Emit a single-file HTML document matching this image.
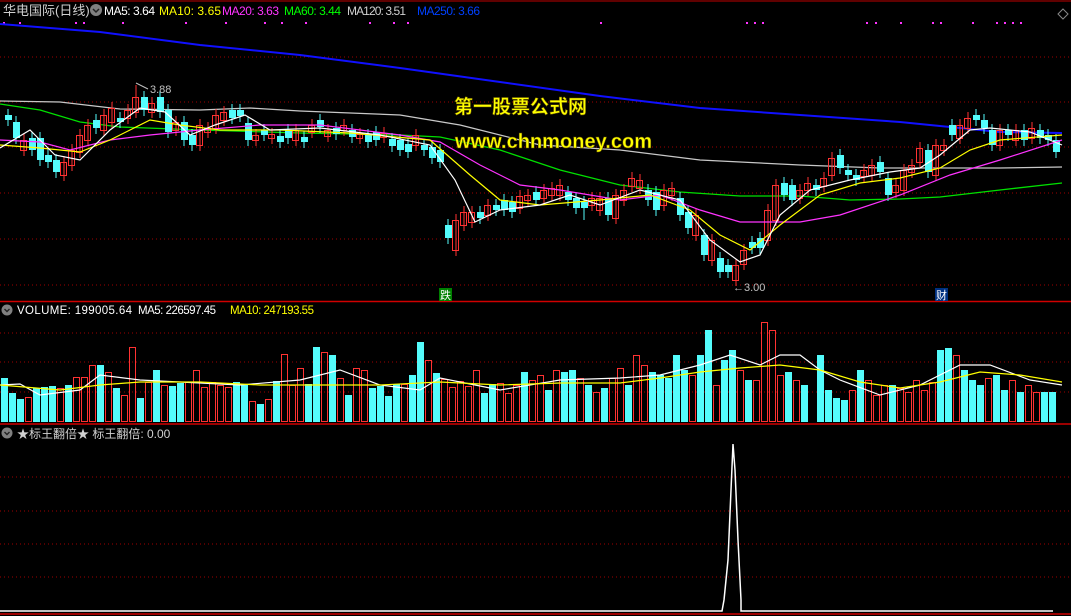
<!DOCTYPE html>
<html><head><meta charset="utf-8"><style>
html,body{margin:0;padding:0;background:#000;width:1071px;height:616px;overflow:hidden}
svg{display:block}
text{font-family:"Liberation Sans","Noto Sans CJK SC",sans-serif}
</style></head><body>
<svg width="1071" height="616" viewBox="0 0 1071 616" xmlns="http://www.w3.org/2000/svg">
<rect width="1071" height="616" fill="#000"/>
<line x1="0" y1="1" x2="1071" y2="1" stroke="#c00000"/>
<g stroke="#a00000" stroke-dasharray="1 3">
<line x1="0" y1="57" x2="1071" y2="57"/><line x1="0" y1="102" x2="1071" y2="102"/><line x1="0" y1="147" x2="1071" y2="147"/><line x1="0" y1="193" x2="1071" y2="193"/><line x1="0" y1="239" x2="1071" y2="239"/><line x1="0" y1="285" x2="1071" y2="285"/>
<line x1="0" y1="333" x2="1071" y2="333"/><line x1="0" y1="362" x2="1071" y2="362"/><line x1="0" y1="392" x2="1071" y2="392"/>
<line x1="0" y1="477" x2="1071" y2="477"/><line x1="0" y1="511" x2="1071" y2="511"/><line x1="0" y1="544" x2="1071" y2="544"/><line x1="0" y1="577" x2="1071" y2="577"/>
</g>
<line x1="0" y1="301.5" x2="1071" y2="301.5" stroke="#d00000" stroke-width="1.5"/>
<line x1="0" y1="424" x2="1071" y2="424" stroke="#d00000" stroke-width="1.5"/>
<line x1="0" y1="614" x2="1071" y2="614" stroke="#d00000" stroke-width="1.5"/>

<!-- title -->
<text x="3" y="15" fill="#d0d0d0" font-size="13">华电国际(日线)</text>
<circle cx="96" cy="10" r="6" fill="#808080"/><path d="M93 9 l3 3 l3 -3" stroke="#222" stroke-width="1.5" fill="none"/>
<g font-size="12">
<text x="104" y="15" fill="#fff" textLength="51">MA5: 3.64</text>
<text x="159" y="15" fill="#ffff00" textLength="62">MA10: 3.65</text>
<text x="222" y="15" fill="#ff33ff" textLength="57">MA20: 3.63</text>
<text x="284" y="15" fill="#00ff00" textLength="57">MA60: 3.44</text>
<text x="347" y="15" fill="#d0d0d0" textLength="59">MA120: 3.51</text>
<text x="417" y="15" fill="#0040ff" textLength="63">MA250: 3.66</text>
</g>
<path d="M1063 9 l5 5 l-5 5 l-5 -5z" stroke="#888" fill="none"/>
<g fill="#ff33ff">
<rect x="3" y="22" width="2" height="2"/><rect x="19" y="22" width="2" height="2"/><rect x="75" y="22" width="2" height="2"/><rect x="83" y="22" width="2" height="2"/><rect x="122" y="22" width="2" height="2"/><rect x="185" y="22" width="2" height="2"/><rect x="225" y="22" width="2" height="2"/><rect x="264" y="22" width="2" height="2"/><rect x="281" y="22" width="2" height="2"/><rect x="305" y="22" width="2" height="2"/><rect x="369" y="22" width="2" height="2"/><rect x="393" y="22" width="2" height="2"/><rect x="407" y="22" width="2" height="2"/><rect x="600" y="22" width="2" height="2"/><rect x="746" y="22" width="2" height="2"/><rect x="754" y="22" width="2" height="2"/><rect x="762" y="22" width="2" height="2"/><rect x="866" y="22" width="2" height="2"/><rect x="875" y="22" width="2" height="2"/><rect x="900" y="22" width="2" height="2"/><rect x="932" y="22" width="2" height="2"/><rect x="940" y="22" width="2" height="2"/><rect x="972" y="22" width="2" height="2"/><rect x="996" y="22" width="2" height="2"/><rect x="1004" y="22" width="2" height="2"/><rect x="1012" y="22" width="2" height="2"/><rect x="1020" y="22" width="2" height="2"/>
</g>

<!-- MA lines -->
<g fill="none" stroke-width="1.3">
<polyline stroke="#1010ff" stroke-width="2" points="0,24 100,32 200,45 300,55 400,68 500,82 600,96 700,108 800,115 900,122 1000,132 1062,133"/>
<polyline stroke="#c8c8c8" points="0,101 60,102 120,109 200,110 250,108 300,111 400,115 460,125 540,145 620,150 700,160 800,165 880,168 940,168 1000,168 1062,167"/>
<polyline stroke="#00e000" points="0,104 40,110 80,122 120,127 200,130 300,133 400,135 440,137 500,150 560,170 620,185 680,192 740,196 800,196 850,200 900,199 940,197 1000,190 1062,183"/>
</g>
<!-- candles -->
<g stroke="#54fcfc" stroke-width="1">
<path d="M8 109V126M16 116V144M32 132V156M40 132V166M48 149V168M56 154V178M96 114V134M120 112V128M144 91V116M160 91V118M168 104V138M184 116V146M192 129V151M232 104V124M240 104V122M248 117V146M264 124V141M280 130V148M288 124V144M304 131V148M320 114V133M336 122V140M352 124V143M368 129V148M376 126V146M392 133V152M400 134V156M408 138V158M424 139V156M432 141V164M440 144V168M448 219V244M480 206V224M496 199V216M504 194V216M512 196V218M536 186V206M568 186V206M576 192V214M584 196V220M608 192V221M648 184V206M656 186V216M680 192V221M688 206V234M704 229V261M720 252V278M728 259V278M752 236V254M760 232V254M784 177V201M792 179V206M816 179V196M840 149V174M848 164V181M856 169V186M880 156V178M888 172V201M928 144V178M952 119V141M976 109V126M984 114V134M992 124V151M1008 124V141M1024 124V146M1040 124V144M1048 129V146M1056 134V158"/>
</g>
<g fill="#54fcfc">
<path d="M5 115h7v5h-7zM13 122h7v16h-7zM29 138h7v12h-7zM37 138h7v22h-7zM45 155h7v7h-7zM53 160h7v12h-7zM93 120h7v8h-7zM117 118h7v4h-7zM141 97h7v13h-7zM157 97h7v15h-7zM165 110h7v22h-7zM181 122h7v18h-7zM189 135h7v10h-7zM229 110h7v8h-7zM237 110h7v6h-7zM245 123h7v17h-7zM261 130h7v5h-7zM277 136h7v6h-7zM285 130h7v8h-7zM301 137h7v5h-7zM317 120h7v7h-7zM333 128h7v6h-7zM349 130h7v7h-7zM365 135h7v7h-7zM373 132h7v8h-7zM389 139h7v7h-7zM397 140h7v10h-7zM405 144h7v8h-7zM421 145h7v5h-7zM429 147h7v11h-7zM437 150h7v12h-7zM445 225h7v13h-7zM477 212h7v6h-7zM493 205h7v5h-7zM501 200h7v10h-7zM509 202h7v10h-7zM533 192h7v8h-7zM565 192h7v8h-7zM573 198h7v10h-7zM581 202h7v6h-7zM605 198h7v17h-7zM645 190h7v10h-7zM653 192h7v18h-7zM677 198h7v17h-7zM685 212h7v16h-7zM701 235h7v20h-7zM717 258h7v14h-7zM725 265h7v7h-7zM749 242h7v6h-7zM757 238h7v10h-7zM781 183h7v12h-7zM789 185h7v15h-7zM813 185h7v5h-7zM837 155h7v13h-7zM845 170h7v5h-7zM853 175h7v5h-7zM877 162h7v10h-7zM885 178h7v17h-7zM925 150h7v22h-7zM949 125h7v10h-7zM973 115h7v5h-7zM981 120h7v8h-7zM989 130h7v15h-7zM1005 130h7v5h-7zM1021 130h7v10h-7zM1037 130h7v8h-7zM1045 135h7v5h-7zM1053 140h7v12h-7z"/>
</g>
<g stroke="#ff3232" stroke-width="1" fill="none">
<path d="M24 134V156M64 156V181M72 144V171M80 129V158M88 119V146M104 109V136M112 102V128M128 104V124M136 85V118M152 97V118M176 116V136M200 119V151M208 122V138M216 109V134M224 106V126M256 129V146M272 128V144M296 124V146M312 119V138M328 124V142M344 119V136M360 128V144M384 127V143M416 129V151M456 214V256M464 206V231M472 206V228M488 199V221M520 190V214M528 189V206M544 184V204M552 182V201M560 179V201M592 192V211M600 192V216M616 189V224M624 184V206M632 172V192M640 174V194M664 184V211M672 182V201M696 209V241M712 234V266M736 259V286M744 244V270M768 204V246M776 179V226M800 184V204M808 177V196M824 172V192M832 152V181M864 164V182M872 159V181M896 179V198M904 164V196M912 159V178M920 142V168M936 139V181M944 139V156M960 119V144M968 112V134M1000 124V151M1016 124V146M1032 122V144"/>
<path d="M20.5 140.5h6v10h-6zM60.5 162.5h6v13h-6zM68.5 150.5h6v15h-6zM76.5 135.5h6v17h-6zM84.5 125.5h6v15h-6zM100.5 115.5h6v15h-6zM108.5 108.5h6v14h-6zM124.5 110.5h6v8h-6zM132.5 97.5h6v15h-6zM148.5 103.5h6v9h-6zM172.5 122.5h6v8h-6zM196.5 125.5h6v20h-6zM204.5 128.5h6v4h-6zM212.5 115.5h6v13h-6zM220.5 112.5h6v8h-6zM252.5 135.5h6v5h-6zM268.5 134.5h6v4h-6zM292.5 130.5h6v10h-6zM308.5 125.5h6v7h-6zM324.5 130.5h6v6h-6zM340.5 125.5h6v5h-6zM356.5 134.5h6v4h-6zM380.5 133.5h6v4h-6zM412.5 135.5h6v10h-6zM452.5 220.5h6v30h-6zM460.5 212.5h6v13h-6zM468.5 212.5h6v10h-6zM484.5 205.5h6v10h-6zM516.5 196.5h6v12h-6zM524.5 195.5h6v5h-6zM540.5 190.5h6v8h-6zM548.5 188.5h6v7h-6zM556.5 185.5h6v10h-6zM588.5 198.5h6v7h-6zM596.5 198.5h6v12h-6zM612.5 195.5h6v23h-6zM620.5 190.5h6v10h-6zM628.5 178.5h6v8h-6zM636.5 180.5h6v8h-6zM660.5 190.5h6v15h-6zM668.5 188.5h6v7h-6zM692.5 215.5h6v20h-6zM708.5 240.5h6v20h-6zM732.5 265.5h6v15h-6zM740.5 250.5h6v14h-6zM764.5 210.5h6v30h-6zM772.5 185.5h6v35h-6zM796.5 190.5h6v8h-6zM804.5 183.5h6v7h-6zM820.5 178.5h6v8h-6zM828.5 158.5h6v17h-6zM860.5 170.5h6v6h-6zM868.5 165.5h6v10h-6zM892.5 185.5h6v7h-6zM900.5 170.5h6v20h-6zM908.5 165.5h6v7h-6zM916.5 148.5h6v14h-6zM932.5 145.5h6v30h-6zM940.5 145.5h6v5h-6zM956.5 125.5h6v13h-6zM964.5 118.5h6v10h-6zM996.5 130.5h6v15h-6zM1012.5 130.5h6v10h-6zM1028.5 128.5h6v10h-6z"/>
</g>
<g fill="none" stroke-width="1.2">
<polyline stroke="#ff33ff" points="0,140 40,142 70,150 110,140 150,135 200,130 260,125 320,125 400,135 440,142 480,165 520,185 560,190 620,200 660,195 700,210 740,222 800,222 840,215 900,195 950,175 1000,160 1062,140"/>
<polyline stroke="#ffff00" points="0,145 40,148 80,152 110,140 150,120 180,125 220,130 280,130 350,133 430,140 470,175 500,200 540,205 600,200 650,195 690,210 720,235 750,250 780,225 820,195 860,183 900,178 940,168 970,150 1000,140 1062,135"/>
<polyline stroke="#ffffff" points="0,148 30,130 55,155 80,160 110,130 140,108 165,112 190,135 215,125 245,115 270,130 320,128 380,135 430,145 455,180 475,222 500,210 540,205 570,195 600,205 640,190 680,200 710,240 740,262 760,255 780,215 810,190 850,180 890,172 920,168 940,155 970,130 990,128 1030,132 1062,145"/>
</g>
<text x="150" y="93" fill="#c0c0c0" font-size="11">3.88</text>
<path d="M136 83 l12 6" stroke="#c0c0c0" fill="none"/>
<text x="733" y="291" fill="#c0c0c0" font-size="11">←3.00</text>
<rect x="439" y="288" width="13" height="13" fill="#008000"/><text x="440" y="299" fill="#fff" font-size="11">跌</text>
<rect x="935" y="288" width="13" height="13" fill="#003080"/><text x="936" y="299" fill="#fff" font-size="11">财</text>

<text x="454" y="113" fill="#ffff00" font-size="19" font-weight="bold" stroke="#605000" stroke-width="0.5" textLength="133">第一股票公式网</text>
<text x="455" y="148" fill="#ffff00" font-size="20" font-weight="bold" stroke="#605000" stroke-width="0.5" textLength="197">www.chnmoney.com</text>

<!-- volume -->
<circle cx="7" cy="310" r="5.5" fill="#808080"/><path d="M4.5 309 l2.5 2.5 l2.5 -2.5" stroke="#222" stroke-width="1.4" fill="none"/>
<g font-size="11.5">
<text x="17" y="314" fill="#fff" textLength="115">VOLUME: 199005.64</text>
<text x="138" y="314" fill="#fff" textLength="78">MA5: 226597.45</text>
<text x="230" y="314" fill="#ffff00" textLength="84">MA10: 247193.55</text>
</g>
<g fill="#54fcfc">
<path d="M1 378h7v44h-7zM9 393h7v29h-7zM17 399h7v23h-7zM33 388h7v34h-7zM41 387h7v35h-7zM49 386h7v36h-7zM65 385h7v37h-7zM97 365h7v57h-7zM113 388h7v34h-7zM137 398h7v24h-7zM153 370h7v52h-7zM169 386h7v36h-7zM177 383h7v39h-7zM233 382h7v40h-7zM241 385h7v37h-7zM257 404h7v18h-7zM273 381h7v41h-7zM305 384h7v38h-7zM313 347h7v75h-7zM329 355h7v67h-7zM345 395h7v27h-7zM369 388h7v34h-7zM377 386h7v36h-7zM385 396h7v26h-7zM393 384h7v38h-7zM409 375h7v47h-7zM417 342h7v80h-7zM433 373h7v49h-7zM481 393h7v29h-7zM489 384h7v38h-7zM521 372h7v50h-7zM545 390h7v32h-7zM561 372h7v50h-7zM569 370h7v52h-7zM585 385h7v37h-7zM601 388h7v34h-7zM625 385h7v37h-7zM649 372h7v50h-7zM657 375h7v47h-7zM665 378h7v44h-7zM673 355h7v67h-7zM681 370h7v52h-7zM697 355h7v67h-7zM705 330h7v92h-7zM721 360h7v62h-7zM729 350h7v72h-7zM745 380h7v42h-7zM785 372h7v50h-7zM801 385h7v37h-7zM817 355h7v67h-7zM825 390h7v32h-7zM833 398h7v24h-7zM841 400h7v22h-7zM857 370h7v52h-7zM889 385h7v37h-7zM937 350h7v72h-7zM945 348h7v74h-7zM961 370h7v52h-7zM969 380h7v42h-7zM977 385h7v37h-7zM993 375h7v47h-7zM1001 390h7v32h-7zM1017 392h7v30h-7zM1041 392h7v30h-7zM1049 392h7v30h-7z"/>
</g>
<g stroke="#ff3232" fill="none">
<path d="M25.5 397.5h6v24h-6zM57.5 388.5h6v33h-6zM73.5 377.5h6v44h-6zM81.5 377.5h6v44h-6zM89.5 365.5h6v56h-6zM105.5 372.5h6v49h-6zM121.5 395.5h6v26h-6zM129.5 347.5h6v74h-6zM145.5 382.5h6v39h-6zM161.5 385.5h6v36h-6zM185.5 382.5h6v39h-6zM193.5 370.5h6v51h-6zM201.5 387.5h6v34h-6zM209.5 382.5h6v39h-6zM217.5 385.5h6v36h-6zM225.5 387.5h6v34h-6zM249.5 401.5h6v20h-6zM265.5 399.5h6v22h-6zM281.5 354.5h6v67h-6zM289.5 385.5h6v36h-6zM297.5 368.5h6v53h-6zM321.5 352.5h6v69h-6zM337.5 378.5h6v43h-6zM353.5 368.5h6v53h-6zM361.5 370.5h6v51h-6zM401.5 384.5h6v37h-6zM425.5 360.5h6v61h-6zM441.5 379.5h6v42h-6zM449.5 387.5h6v34h-6zM457.5 381.5h6v40h-6zM465.5 386.5h6v35h-6zM473.5 370.5h6v51h-6zM497.5 383.5h6v38h-6zM505.5 393.5h6v28h-6zM513.5 385.5h6v36h-6zM529.5 380.5h6v41h-6zM537.5 375.5h6v46h-6zM553.5 370.5h6v51h-6zM577.5 378.5h6v43h-6zM593.5 392.5h6v29h-6zM609.5 378.5h6v43h-6zM617.5 368.5h6v53h-6zM633.5 355.5h6v66h-6zM641.5 365.5h6v56h-6zM689.5 375.5h6v46h-6zM713.5 385.5h6v36h-6zM737.5 370.5h6v51h-6zM753.5 380.5h6v41h-6zM761.5 322.5h6v99h-6zM769.5 330.5h6v91h-6zM777.5 375.5h6v46h-6zM793.5 380.5h6v41h-6zM849.5 390.5h6v31h-6zM865.5 380.5h6v41h-6zM873.5 395.5h6v26h-6zM881.5 385.5h6v36h-6zM897.5 388.5h6v33h-6zM905.5 392.5h6v29h-6zM913.5 380.5h6v41h-6zM921.5 390.5h6v31h-6zM929.5 382.5h6v39h-6zM953.5 355.5h6v66h-6zM985.5 378.5h6v43h-6zM1009.5 380.5h6v41h-6zM1025.5 385.5h6v36h-6zM1033.5 392.5h6v29h-6z"/>
</g>
<g fill="none" stroke-width="1.2">
<polyline stroke="#ffffff" points="0,385 20,384 40,395 80,390 100,375 140,380 200,383 240,385 300,380 340,370 380,385 420,390 440,378 460,382 500,390 560,380 620,378 660,375 700,365 730,355 760,365 780,355 800,355 820,370 840,380 880,395 920,385 960,365 990,365 1030,380 1062,385"/>
<polyline stroke="#ffff00" points="0,385 60,390 100,385 140,382 200,382 260,385 320,385 380,385 440,382 500,385 560,383 620,383 660,378 700,372 740,368 780,365 820,370 860,382 900,388 940,382 980,372 1020,375 1062,382"/>
</g>

<!-- bottom indicator -->
<circle cx="7" cy="433" r="5.5" fill="#808080"/><path d="M4.5 432 l2.5 2.5 l2.5 -2.5" stroke="#222" stroke-width="1.4" fill="none"/>
<text x="17" y="438" fill="#d0d0d0" font-size="12">★标王翻倍★  标王翻倍: 0.00</text>
<polyline fill="none" stroke="#fff" stroke-width="1.5" points="0,611 722,611 724,600 728,560 731,490 733,444 735,470 738,540 741,600 741,611 1053,611"/>
</svg>
</body></html>
